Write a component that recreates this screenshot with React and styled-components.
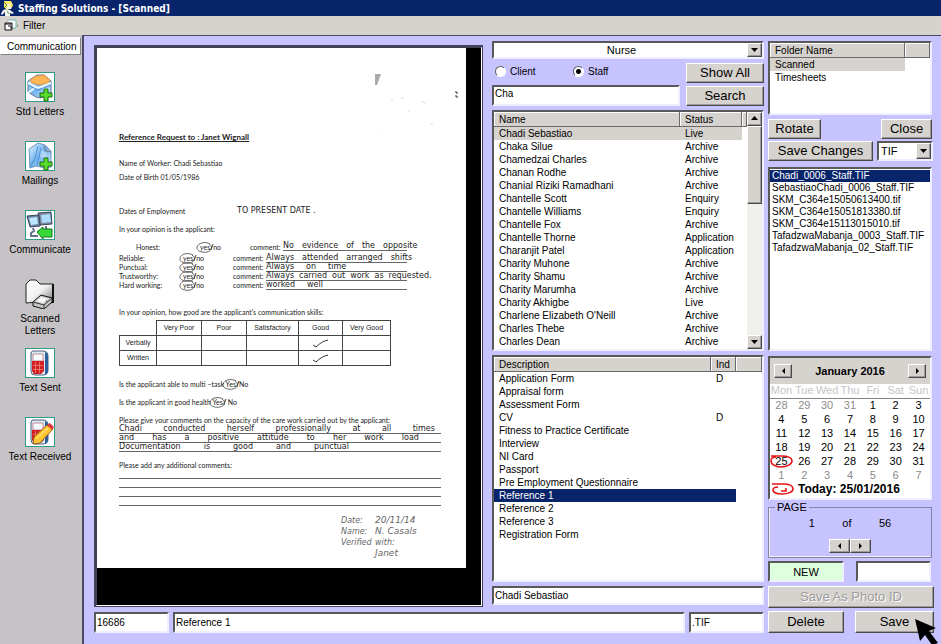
import { useState } from 'react';
import styled, { createGlobalStyle, css } from 'styled-components';

const GlobalStyle = createGlobalStyle`
    * {
        box-sizing: border-box;
    }
    body {
        margin: 0;
        background-color: #c6c3ff;
        color: #000;
        font-family: "Liberation Sans", Arial, sans-serif;
        font-size: 10px;
        line-height: 13px;
    }
    button, input, select {
        font-family: inherit;
        font-size: inherit;
        color: inherit;
        margin: 0;
        border-radius: 0;
    }
    table {
        border-collapse: collapse;
    }
    td, th {
        padding: 0;
        font-weight: 400;
        text-align: left;
    }
`

const sunken = css`
    border: 2px solid;
    border-color: #5a595a #efefff #efefff #5a595a;
    background-color: #fff;
`

const raised = css`
    border: 1px solid;
    border-color: #fff #4a494a #4a494a #fff;
    box-shadow: inset -1px -1px 0 #9c9a9c;
    background-color: #d6d3ce;
`

const Window = styled.div`
    display: flex;
    flex-direction: column;
    min-height: 100vh;
`

const TitleBar = styled.header`
    display: flex;
    align-items: center;
    gap: 3px;
    height: 16px;
    padding-left: 1px;
    background-color: #08246b;
    color: #fff;
    font-family: "DejaVu Sans Condensed", "DejaVu Sans", sans-serif;
    font-weight: 700;
`

const MenuBar = styled.nav`
    display: flex;
    align-items: center;
    gap: 3px;
    height: 19px;
    padding-left: 4px;
    background-color: #d6d3ce;
`

const MenuItem = styled.button`
    padding: 0;
    border: none;
    background: none;
`

const Body = styled.div`
    display: flex;
    flex: 1;
`

const Sidebar = styled.aside`
    flex: 0 0 84px;
    background-color: #c6c3c6;
    border-right: 2px solid #4a4963;
`

const SidebarTab = styled.button`
    display: block;
    width: 81px;
    height: 18px;
    margin: 2px 0 17px;
    padding: 0 4px 0 6px;
    border: 1px solid;
    border-color: #fff #848284 #848284 #fff;
    background-color: #fff;
    text-align: right;
`

const NavItem = styled.button`
    display: flex;
    flex-direction: column;
    align-items: center;
    gap: 4px;
    width: 80px;
    height: 69px;
    padding: 0 12px;
    border: none;
    background: none;
    line-height: 12px;
    white-space: ${props => props.$wrap ? 'normal' : 'nowrap'};
    svg {
        flex: none;
    }
`

const Workspace = styled.main`
    display: flex;
    flex: 1;
    gap: 4px;
    min-width: 0;
    padding: 5px 7px 10px 10px;
    border-top: 1px solid #4a4963;
`

const Work = styled.div`
    display: flex;
    flex-direction: column;
    flex: 1;
    gap: 5px;
    min-width: 0;
`

const Columns = styled.div`
    display: flex;
    gap: 9px;
`

const Viewer = styled.section`
    flex: 1;
    min-width: 0;
    margin-top: 4px;
    padding: 0 15px 37px 0;
    border: solid;
    border-width: 3px 2px 2px 3px;
    border-color: #42415a #fff #fff #42415a;
    outline: 1px solid #42415a;
    outline-offset: -1px;
    background-color: #000;
`

const Page = styled.article`
    height: 520px;
    padding: 84px 25px 0 22px;
    position: relative;
    background-color: #fff;
    color: #222;
    font-family: Lato, sans-serif;
    font-size: 7px;
    line-height: 10px;
    white-space: nowrap;
`

const Line = styled.p`
    margin: ${props => props.$top}px 0 0;
`

const DatesLine = styled(Line)`
    display: grid;
    grid-template-columns: 118px 1fr;
`

const Heading = styled.h1`
    margin: 0;
    font-size: 8px;
    line-height: 10px;
    text-decoration: underline;
`

const Hand = styled.span`
    color: ${props => props.$faint ? '#666' : '#222'};
    font-family: "DejaVu Sans", cursive;
    font-style: ${props => props.$faint ? 'italic' : 'normal'};
    font-weight: ${props => props.$faint ? 200 : 400};
    font-size: ${props => props.$size || 8}px;
`

const Opinion = styled.div`
    display: grid;
    grid-template-columns: 64px 50px 33px 1fr;
    height: ${props => props.$first ? 12 : 9}px;
    margin-top: ${props => props.$first ? 8 : 0}px;
    padding-left: ${props => props.$first ? 17 : 0}px;
    line-height: ${props => props.$first ? 10 : 9}px;
`

const Written = styled.span`
    display: flex;
    width: ${props => props.$width}px;
    height: 9px;
    gap: ${props => props.$gap}px;
    border-bottom: 1px solid #666;
    line-height: 8px;
`

const Circled = styled.span`
    position: relative;
    svg {
        position: absolute;
        left: -4px;
        top: -2px;
    }
`

const RuledLine = styled.div`
    display: flex;
    justify-content: space-between;
    height: 9px;
    padding-right: ${props => props.$end || 0}px;
    border-bottom: 1px solid #666;
    line-height: 8px;
`

const SkillTable = styled.table`
    margin-top: 3px;
    table-layout: fixed;
    width: 271px;
    color: #222;
    font-family: "Liberation Sans", sans-serif;
    td, th {
        height: 15px;
        border: 1px solid #444;
        text-align: center;
        line-height: 8px;
    }
    td.corner {
        border-top: none;
        border-left: none;
    }
    svg {
        display: block;
        margin: 0 auto;
    }
`

const Signature = styled.div`
    display: grid;
    grid-template-columns: 34px 1fr;
    margin: 9px 0 0 222px;
    line-height: 11px;
`

const ScanMarks = styled.svg`
    position: absolute;
    top: 0;
    right: 0;
`

const People = styled.section`
    display: flex;
    flex-direction: column;
    flex: 0 0 272px;
    gap: 4px;
`

const ComboBox = styled.div`
    ${sunken}
    display: flex;
    height: ${props => props.$tall ? 20 : 18}px;
    width: ${props => props.$tall ? '56px' : '100%'};
`

const ComboSelect = styled.select`
    appearance: none;
    flex: 1;
    min-width: 0;
    padding: 0 0 0 2px;
    border: none;
    background: none;
    font-size: 11px;
    text-align-last: ${props => props.$center ? 'center' : 'left'};
`

const Square = styled.span`
    ${raised}
    display: flex;
    align-items: center;
    justify-content: center;
    width: 15px;
    align-self: stretch;
`

const SearchGrid = styled.div`
    display: grid;
    grid-template-columns: 1fr 78px;
    gap: 2px 6px;
    align-items: center;
`

const Radios = styled.div`
    display: flex;
    align-items: center;
    padding-left: 3px;
`

const RadioLabel = styled.label`
    display: flex;
    align-items: center;
    gap: 4px;
    width: 78px;
    padding-bottom: 4px;
`

const Radio = styled.input`
    appearance: none;
    width: 11px;
    height: 11px;
    border: 1px solid;
    border-color: #636163 #fff #fff #636163;
    border-radius: 50%;
    background: #fff;
    &:checked {
        background: radial-gradient(circle, #000 2px, #fff 3px);
    }
`

const Button = styled.button`
    ${raised}
    width: ${props => props.$width ? props.$width + 'px' : '100%'};
    height: ${props => props.$tall ? 22 : 20}px;
    padding: 0;
    font-size: 13px;
    line-height: 16px;
    &:disabled {
        color: #9c9a9c;
        text-shadow: 1px 1px 0 #fff;
    }
`

const TextBox = styled.input`
    ${sunken}
    width: ${props => props.$width ? props.$width + 'px' : '100%'};
    min-width: 0;
    flex: ${props => props.$grow ? 1 : 'none'};
    height: ${props => props.$height || 21}px;
    padding: 0 1px ${props => props.$top ? 4 : 0}px;
    ${props => props.$mint && css`
        background-color: #deffde;
        text-align: center;
        font-size: 11px;
    `}
`

const ListBox = styled.div`
    ${sunken}
    display: flex;
    align-items: stretch;
    height: ${props => props.$height}px;
    overflow: hidden;
`

const ListTable = styled.table`
    flex: 1;
    width: 100%;
    height: max-content;
    table-layout: fixed;
    td, th {
        height: 13px;
        padding-left: 5px;
        white-space: nowrap;
    }
`

const HeadCell = styled.th`
    && {
        height: 15px;
        width: ${props => props.$width ? props.$width + 'px' : 'auto'};
        background-color: #d6d3ce;
        box-shadow: inset -1px -1px 0 #6b696b, inset 1px 1px 0 #fff;
    }
`

const Row = styled.tr`
    td:not(.rest) {
        background-color: ${props => props.$tone || 'transparent'};
    }
    color: ${props => props.$tone === '#08246b' ? '#fff' : '#000'};
`

const ScrollBar = styled.div`
    display: flex;
    flex-direction: column;
    justify-content: space-between;
    flex: 0 0 15px;
    background-color: #efefec;
`

const Thumb = styled.div`
    ${raised}
    height: 78px;
    margin-bottom: auto;
`

const SmallButton = styled.button`
    ${raised}
    display: flex;
    align-items: center;
    justify-content: center;
    width: ${props => props.$width || 15}px;
    height: 14px;
    padding: 0;
`

const BottomRow = styled.div`
    display: flex;
    gap: 4px;
`

const Tools = styled.aside`
    display: flex;
    flex-direction: column;
    flex: 0 0 166px;
    min-width: 0;
`

const ToolRow = styled.div`
    display: flex;
    justify-content: space-between;
    padding-right: ${props => props.$inset || 0}px;
    margin-top: ${props => props.$top}px;
`

const Panel = styled.div`
    margin: ${props => props.$top || 0}px 2px 0 0;
`

const FileList = styled.ul`
    ${sunken}
    height: 184px;
    margin: 0;
    padding: 1px 0 0;
    list-style: none;
    line-height: 12px;
`

const FileItem = styled.li`
    padding-left: 2px;
    white-space: nowrap;
    background-color: ${props => props.$selected ? '#08246b' : 'transparent'};
    color: ${props => props.$selected ? '#fff' : '#000'};
`

const Calendar = styled.div`
    ${sunken}
    height: 144px;
    font-size: 11px;
`

const CalendarHead = styled.div`
    display: flex;
    align-items: center;
    justify-content: space-between;
    height: 26px;
    padding: 0 4px;
    background-color: #d6d3ce;
    font-weight: 700;
`

const Days = styled.table`
    width: 100%;
    table-layout: fixed;
    td, th {
        height: 14px;
        text-align: center;
        line-height: 13px;
    }
    thead {
        color: #c6c3c6;
        border-bottom: 1px solid #848284;
    }
`

const Day = styled.td`
    position: relative;
    color: ${props => props.$outside ? '#8c8a8c' : '#000'};
    svg {
        position: absolute;
        left: 0;
        top: 0;
    }
`

const Today = styled.div`
    display: flex;
    align-items: center;
    gap: 4px;
    padding-left: 1px;
    height: 14px;
    font-weight: 700;
    font-size: 12px;
`

const PageBox = styled.fieldset`
    height: 57px;
    min-width: 0;
    margin: 1px 2px 0 0;
    padding: 4px 0 0;
    border: 1px solid #8482a5;
    box-shadow: inset 1px -1px 0 #efefff;
    font-size: 11px;
    legend {
        margin-left: 6px;
        padding: 0 2px;
        line-height: 12px;
    }
`

const PageCount = styled.div`
    display: flex;
    justify-content: space-around;
    padding: 0 26px;
`

const Pager = styled.div`
    display: flex;
    justify-content: center;
    margin-top: 9px;
`

const SaveSpot = styled.div`
    position: relative;
    width: 79px;
    svg {
        position: absolute;
        left: 59px;
        top: 7px;
    }
`

const Arrow = ({ dir }) => {
    const points = {
        up: '0,4 7,4 3.5,0',
        down: '0,1 7,1 3.5,5',
        left: '5,0 5,6 2,3',
        right: '2,0 2,6 5,3',
    }
    return (
        <svg width="7" height="6" viewBox="0 0 7 6" aria-hidden="true">
            <polygon points={points[dir]} fill="#000" />
        </svg>
    )
}

const Frame = ({ children }) => (
    <svg width="30" height="30" viewBox="0 0 30 30" aria-hidden="true">
        <defs>
            <linearGradient id="blue" x1="0" y1="0" x2="1" y2="1">
                <stop offset="0" stopColor="#e4f3ff" />
                <stop offset="0.5" stopColor="#6fb2ee" />
                <stop offset="1" stopColor="#e0f0fd" />
            </linearGradient>
        </defs>
        <rect x="0.5" y="0.5" width="29" height="29" fill="#fff" stroke="#319a84" />
        {children}
    </svg>
)

const Plus = () => (
    <path d="M19 17h4v4h4v4h-4v4h-4v-4h-4v-4h4z" fill="#5bdc2c" stroke="#176b12" />
)

const Phone = () => (
    <g>
        <path d="M8 3h10q5 0 5 5v14q0 5-5 5h-8q-4 0-4-4V6q0-3 2-3z" fill="#dce9f7" stroke="#4a5e7c" />
        <path d="M20 4q3 1 3 4v14q0 4-3 5z" fill="#2b5f9c" />
        <path d="M8 6h10v7H8z" fill="#f7fbff" stroke="#c48a90" />
        <path d="M7 13h12v10l-3 3H9l-2-3z" fill="#d31f22" />
        <path d="M8 17.5h10M8 21.5h10M10.500 14v11M14.500 14v11" stroke="#f08f84" strokeWidth="0.7" />
    </g>
)

const LettersIcon = () => (
    <Frame>
        <path d="M3 9L12 3h7l7 6v12l-10 5-5-1-8-5z" fill="url(#blue)" stroke="#5c7698" />
        <path d="M5 8l6-4 8-1 6 5-2 3-8 2-8-2z" fill="#ffb455" stroke="#d58a35" strokeWidth="0.7" />
        <path d="M3 11l10 5 13-5M3 21l8-6M24 18l-7-3" fill="none" stroke="#eaf6ff" strokeWidth="2" />
        <path d="M3 13l10 5 13-5" fill="none" stroke="#4a8fdb" />
        <Plus />
    </Frame>
)

const MailingsIcon = () => (
    <Frame>
        <path d="M4 8l9-6 7 2 6 6v16l-6 1-9-2-6 2z" fill="url(#blue)" stroke="#7196bd" />
        <path d="M13 5l-3 12-5 9M16 7l-4 18" fill="none" stroke="#4d92d6" />
        <path d="M19 5l2 5 5 1" fill="none" stroke="#777" />
        <path d="M16 9l6 3-1 5-6-1z" fill="#fff" opacity="0.4" />
        <Plus />
    </Frame>
)

const CommunicateIcon = () => (
    <Frame>
        <path d="M13 3l13-1 1 12-12 1z" fill="#7d8a9c" stroke="#39465a" />
        <path d="M16 5l9-1 1 8-9 1z" fill="#aedcff" />
        <path d="M2 6l12-1 1 11-10 1z" fill="#6b84a3" stroke="#39465a" />
        <path d="M4 8l8-1 1 7-7 1z" fill="#bfe6ff" />
        <path d="M8 18l1 3-3 2v3h7M21 16v3" fill="none" stroke="#65748c" strokeWidth="2" />
        <path d="M12 22l6-5v2h9v8h-9v2z" fill="#36d83a" stroke="#13711d" />
    </Frame>
)

const ScannedIcon = () => (
    <svg width="30" height="30" viewBox="0 0 30 30" aria-hidden="true">
        <defs>
            <linearGradient id="folder" x1="0" y1="0" x2="1" y2="1">
                <stop offset="0" stopColor="#fff" />
                <stop offset="0.5" stopColor="#f2f2f2" />
                <stop offset="1" stopColor="#777" />
            </linearGradient>
        </defs>
        <path d="M1 24V5l4-4h6l4 4h13v17z" fill="url(#folder)" stroke="#222" />
        <path d="M28 5v18l-10 2" fill="none" stroke="#111" strokeWidth="2" />
        <path d="M8 23l8-7 11 3v4l-8 7-11-3z" fill="#c7c7c7" stroke="#111" />
        <path d="M8 23l11 3 8-7M19 26v4M14 20l8 2" fill="none" stroke="#333" />
        <path d="M11 22l5-4 7 2-5 4z" fill="#f7f7f7" />
    </svg>
)

const SentIcon = () => (
    <Frame>
        <Phone />
    </Frame>
)

const ReceivedIcon = () => (
    <Frame>
        <Phone />
        <path d="M9 20L22 8l6 4-13 14-7 1z" fill="#ffc533" stroke="#9a5b18" />
        <path d="M22 8l3-2 4 4-2 3z" fill="#d63a3e" />
        <path d="M11 22l12-11" stroke="#fff0a0" />
    </Frame>
)

const AppIcon = () => (
    <svg width="14" height="16" viewBox="0 0 14 16" aria-hidden="true">
        <path d="M3 1h7l2 4-2 4H5L3 7z" fill="#ffed69" />
        <path d="M6 4h4v5H6z" fill="#fff3cd" />
        <path d="M2 10l4-1 3 1 4 3-2 1-2-1v3H4v-4l-3 3-1-1z" fill="#f5f5ef" />
        <path d="M3 2l3 3-3 3M6 11l2 3" fill="none" stroke="#62933c" />
    </svg>
)

const FormIcon = () => (
    <svg width="16" height="13" viewBox="0 0 16 13" aria-hidden="true">
        <path d="M3 1h9v8H9" fill="#fff" stroke="#70b8b0" />
        <path d="M1 4h7v7H1z" fill="#fff" stroke="#111" />
        <path d="M1 5h7M4 7h3v3" fill="none" stroke="#111" />
        <path d="M13 5l2 2-2 1" fill="#999" />
    </svg>
)

const Ring = () => (
    <svg width="20" height="13" viewBox="0 0 20 13" fill="none" stroke="#444" aria-hidden="true">
        <path d="M14 3C9 0 2 2 1 6s5 6 10 5 6-6 2-8M15 9l2-6" strokeWidth="0.8" />
    </svg>
)

const Tick = () => (
    <svg width="17" height="9" viewBox="0 0 17 9" fill="none" stroke="#333" aria-hidden="true">
        <path d="M1 6l3 2C7 5 11 2 16 1" />
    </svg>
)

const RedRing = ({ tail }) => (
    <svg width="23" height="14" viewBox="0 0 23 14" fill="none" stroke="#e71418" strokeWidth="1.600" aria-hidden="true">
        {tail
            ? <path d="M1 2h11c6 0 10 2 10 5s-5 5-11 5-9-2-9-4 2-3 5-3M10 9h5V6" />
            : <path d="M1 2h10c7 0 11 2 11 5s-5 6-11 6S1 10 1 7s2-4 5-4" />}
    </svg>
)

const nav = [
    ['Std Letters', LettersIcon],
    ['Mailings', MailingsIcon],
    ['Communicate', CommunicateIcon],
    ['Scanned Letters', ScannedIcon],
    ['Text Sent', SentIcon],
    ['Text Received', ReceivedIcon],
]

const people = [
    ['Chadi Sebastiao', 'Live'],
    ['Chaka Silue', 'Archive'],
    ['Chamedzai Charles', 'Archive'],
    ['Chanan Rodhe', 'Archive'],
    ['Chanial Riziki Ramadhani', 'Archive'],
    ['Chantelle Scott', 'Enquiry'],
    ['Chantelle Williams', 'Enquiry'],
    ['Chantelle Fox', 'Archive'],
    ['Chantelle Thorne', 'Application'],
    ['Charanjit Patel', 'Application'],
    ['Charity Muhone', 'Archive'],
    ['Charity Shamu', 'Archive'],
    ['Charity Marumha', 'Archive'],
    ['Charity Akhigbe', 'Live'],
    ["Charlene Elizabeth O'Neill", 'Archive'],
    ['Charles Thebe', 'Archive'],
    ['Charles Dean', 'Archive'],
    ['Charles Gillies', 'Archive'],
]

const documents = [
    'Application Form', 'Appraisal form', 'Assessment Form', 'CV',
    'Fitness to Practice Certificate', 'Interview', 'NI Card', 'Passport',
    'Pre Employment Questionnaire', 'Reference 1', 'Reference 2',
    'Reference 3', 'Registration Form',
]

const files = [
    'Chadi_0006_Staff.TIF', 'SebastiaoChadi_0006_Staff.TIF',
    'SKM_C364e15050613400.tif', 'SKM_C364e15051813380.tif',
    'SKM_C364e15113015010.tif', 'TafadzwaMabanja_0003_Staff.TIF',
    'TafadzwaMabanja_02_Staff.TIF',
]

const opinions = [
    ['Honest:', 'No evidence of the opposite', 124, 8],
    ['Reliable:', 'Always attended arranged shifts', 141, 8],
    ['Punctual:', 'Always on time', 141, 12],
    ['Trustworthy:', 'Always carried out work as requested.', 141, 5],
    ['Hard working:', 'worked well', 141, 12],
]

const comments = [
    ['Chadi conducted herself professionally at all times', 6],
    ['and has a positive attitude to her work load', 22],
    ['Documentation is good and punctual', 92],
]

const weekDays = ['Mon', 'Tue', 'Wed', 'Thu', 'Fri', 'Sat', 'Sun']

// six weeks starting on Monday 28 December
const weeks = Array.from({ length: 6 }, (_, w) =>
    Array.from({ length: 7 }, (_, d) => new Date(2016, 0, w * 7 + d - 3)))

const words = text => text.split(' ').map((word, i) => <Hand key={i}>{word}</Hand>)

const ScannedPage = () => (
    <Page>
        <ScanMarks width="110" height="110" viewBox="0 0 110 110" aria-hidden="true">
            <path d="M19 26h6l-4 11h-2z" fill="#aaa" />
            <path d="M35 52h2M45 50h3M52 63h2M66 53l3 3M74 77l3-2M22 85h1" stroke="#ddd" fill="none" />
            <path d="M99 44h2v2M99 48h2v2" stroke="#333" fill="none" />
        </ScanMarks>
        <Heading>Reference Request to : Janet Wignall</Heading>
        <Line $top={16}>Name of Worker: Chadi Sebastiao</Line>
        <Line $top={4}>Date of Birth 01/05/1986</Line>
        <DatesLine $top={24}>
            Dates of Employment
            <Hand>TO PRESENT DATE .</Hand>
        </DatesLine>
        <Line $top={8}>In your opinion is the applicant:</Line>
        {opinions.map(([label, text, width, gap], i) => (
            <Opinion key={label} $first={i === 0}>
                <span>{label}</span>
                <span><Circled>yes<Ring /></Circled>/no</span>
                <span>comment:</span>
                <Written $width={width} $gap={gap}>{words(text)}</Written>
            </Opinion>
        ))}
        <Line $top={17}>In your opinion, how good are the applicant's communication skills:</Line>
        <SkillTable>
            <colgroup>
                <col width="37" /><col width="45" /><col width="45" />
                <col width="52" /><col width="44" /><col width="48" />
            </colgroup>
            <tbody>
                <tr>
                    <td className="corner"></td>
                    <th>Very Poor</th>
                    <th>Poor</th>
                    <th>Satisfactory</th>
                    <th>Good</th>
                    <th>Very Good</th>
                </tr>
                {['Verbally', 'Written'].map(name => (
                    <tr key={name}>
                        <th>{name}</th>
                        <td></td><td></td><td></td>
                        <td><Tick /></td>
                        <td></td>
                    </tr>
                ))}
            </tbody>
        </SkillTable>
        <Line $top={13}>Is the applicant able to multi –task <Circled>Yes<Ring /></Circled>/No</Line>
        <Line $top={8}>Is the applicant in good health <Circled>Yes<Ring /></Circled>/ No</Line>
        <Line $top={8}>Please give your comments on the capacity of the care work carried out by the applicant:</Line>
        {comments.map(([text, end]) => (
            <RuledLine key={text} $end={end}>{words(text)}</RuledLine>
        ))}
        <Line $top={8}>Please add any additional comments:</Line>
        <RuledLine /><RuledLine /><RuledLine /><RuledLine />
        <Signature>
            <Hand $faint>Date:</Hand><Hand $faint $size={9}>20/11/14</Hand>
            <Hand $faint>Name:</Hand><Hand $faint $size={9}>N. Casals</Hand>
            <Hand $faint>Verified</Hand><Hand $faint>with:</Hand>
            <span /><Hand $faint $size={9}>Janet</Hand>
        </Signature>
    </Page>
)

const App = () => {
    const [kind, setKind] = useState('Staff')

    return (
        <Window>
            <GlobalStyle />
            <TitleBar><AppIcon />Staffing Solutions - [Scanned]</TitleBar>
            <MenuBar><FormIcon /><MenuItem>Filter</MenuItem></MenuBar>
            <Body>
                <Sidebar>
                    <SidebarTab>Communication</SidebarTab>
                    {nav.map(([label, Icon]) => (
                        <NavItem key={label} $wrap={label === 'Scanned Letters'}>
                            <Icon />
                            {label}
                        </NavItem>
                    ))}
                </Sidebar>
                <Workspace>
                    <Work>
                        <Columns>
                            <Viewer><ScannedPage /></Viewer>
                            <People>
                                <ComboBox>
                                    <ComboSelect $center aria-label="Job">
                                        <option>Nurse</option>
                                    </ComboSelect>
                                    <Square><Arrow dir="down" /></Square>
                                </ComboBox>
                                <SearchGrid>
                                    <Radios>
                                        {['Client', 'Staff'].map(name => (
                                            <RadioLabel key={name}>
                                                <Radio
                                                    type="radio"
                                                    name="kind"
                                                    checked={kind === name}
                                                    onChange={() => setKind(name)}
                                                />
                                                {name}
                                            </RadioLabel>
                                        ))}
                                    </Radios>
                                    <Button>Show All</Button>
                                    <TextBox $top defaultValue="Cha" aria-label="Search name" />
                                    <Button>Search</Button>
                                </SearchGrid>
                                <ListBox $height={241}>
                                    <ListTable>
                                        <thead>
                                            <tr>
                                                <HeadCell>Name</HeadCell>
                                                <HeadCell $width={62}>Status</HeadCell>
                                                <HeadCell $width={5} />
                                            </tr>
                                        </thead>
                                        <tbody>
                                            {people.map(([name, status], i) => (
                                                <Row key={name} $tone={i === 0 ? '#d6d3ce' : undefined}>
                                                    <td>{name}</td>
                                                    <td>{status}</td>
                                                    <td className="rest"></td>
                                                </Row>
                                            ))}
                                        </tbody>
                                    </ListTable>
                                    <ScrollBar>
                                        <SmallButton aria-label="Scroll up"><Arrow dir="up" /></SmallButton>
                                        <Thumb />
                                        <SmallButton aria-label="Scroll down"><Arrow dir="down" /></SmallButton>
                                    </ScrollBar>
                                </ListBox>
                                <ListBox $height={227}>
                                    <ListTable>
                                        <thead>
                                            <tr>
                                                <HeadCell>Description</HeadCell>
                                                <HeadCell $width={25}>Ind</HeadCell>
                                                <HeadCell $width={26} />
                                            </tr>
                                        </thead>
                                        <tbody>
                                            {documents.map(name => (
                                                <Row key={name} $tone={name === 'Reference 1' ? '#08246b' : undefined}>
                                                    <td>{name}</td>
                                                    <td>{['Application Form', 'CV'].includes(name) && 'D'}</td>
                                                    <td className="rest"></td>
                                                </Row>
                                            ))}
                                        </tbody>
                                    </ListTable>
                                </ListBox>
                                <TextBox $height={19} defaultValue="Chadi Sebastiao" aria-label="Selected name" />
                            </People>
                        </Columns>
                        <BottomRow>
                            <TextBox $width={75} defaultValue="16686" aria-label="Record number" />
                            <TextBox $grow defaultValue="Reference 1" aria-label="Document" />
                            <TextBox $width={75} defaultValue=".TIF" aria-label="Extension" />
                        </BottomRow>
                    </Work>
                    <Tools>
                        <Panel>
                            <ListBox $height={74}>
                                <ListTable>
                                    <thead>
                                        <tr>
                                            <HeadCell>Folder Name</HeadCell>
                                            <HeadCell $width={25} />
                                        </tr>
                                    </thead>
                                    <tbody>
                                        <Row $tone="#d6d3ce"><td>Scanned</td><td className="rest"></td></Row>
                                        <Row><td>Timesheets</td><td className="rest"></td></Row>
                                    </tbody>
                                </ListTable>
                            </ListBox>
                        </Panel>
                        <ToolRow $top={4} $inset={2}>
                            <Button $width={53}>Rotate</Button>
                            <Button $width={51}>Close</Button>
                        </ToolRow>
                        <ToolRow $top={2} $inset={1}>
                            <Button $width={105}>Save Changes</Button>
                            <ComboBox $tall>
                                <ComboSelect aria-label="File type">
                                    <option>TIF</option>
                                </ComboSelect>
                                <Square><Arrow dir="down" /></Square>
                            </ComboBox>
                        </ToolRow>
                        <Panel $top={6}>
                            <FileList>
                                {files.map((name, i) => (
                                    <FileItem key={name} $selected={i === 0}>{name}</FileItem>
                                ))}
                            </FileList>
                        </Panel>
                        <Panel $top={5}>
                            <Calendar>
                                <CalendarHead>
                                    <SmallButton $width={18} aria-label="Previous month"><Arrow dir="left" /></SmallButton>
                                    January 2016
                                    <SmallButton $width={18} aria-label="Next month"><Arrow dir="right" /></SmallButton>
                                </CalendarHead>
                                <Days>
                                    <thead>
                                        <tr>{weekDays.map(day => <th key={day}>{day}</th>)}</tr>
                                    </thead>
                                    <tbody>
                                        {weeks.map((week, i) => (
                                            <tr key={i}>
                                                {week.map(date => (
                                                    <Day key={date.getTime()} $outside={date.getMonth() !== 0}>
                                                        {date.getDate()}
                                                        {date.getDate() === 25 && <RedRing />}
                                                    </Day>
                                                ))}
                                            </tr>
                                        ))}
                                    </tbody>
                                </Days>
                                <Today><RedRing tail />Today: 25/01/2016</Today>
                            </Calendar>
                        </Panel>
                        <PageBox>
                            <legend>PAGE</legend>
                            <PageCount><span>1</span><span>of</span><span>56</span></PageCount>
                            <Pager>
                                <SmallButton $width={21} aria-label="Previous page"><Arrow dir="left" /></SmallButton>
                                <SmallButton $width={21} aria-label="Next page"><Arrow dir="right" /></SmallButton>
                            </Pager>
                        </PageBox>
                        <ToolRow $top={3} $inset={3}>
                            <TextBox $mint $width={76} defaultValue="NEW" aria-label="State" />
                            <TextBox $width={75} aria-label="Note" />
                        </ToolRow>
                        <ToolRow $top={4}>
                            <Button $tall disabled>Save As Photo ID</Button>
                        </ToolRow>
                        <ToolRow $top={3}>
                            <Button $tall $width={76}>Delete</Button>
                            <SaveSpot>
                                <Button $tall>Save</Button>
                                <svg width="28" height="26" viewBox="0 0 28 26" aria-hidden="true">
                                    <path d="M1 1l21 9-7 3 9 12-6 2-7-10-5 6z" fill="#000" />
                                </svg>
                            </SaveSpot>
                        </ToolRow>
                    </Tools>
                </Workspace>
            </Body>
        </Window>
    )
}

export default App;
